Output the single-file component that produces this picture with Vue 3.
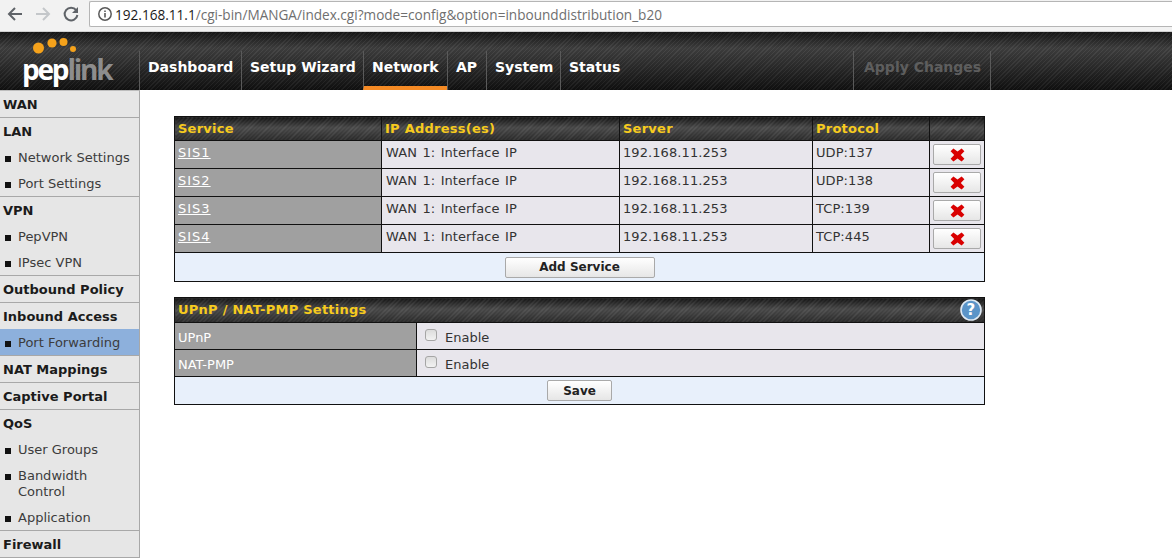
<script setup>
const navItems = [
  { label: 'Dashboard', w: 102 },
  { label: 'Setup Wizard', w: 122 },
  { label: 'Network', w: 84, active: true },
  { label: 'AP', w: 39 },
  { label: 'System', w: 74 },
  { label: 'Status', w: 68 }
]
const sidebar = [
  { title: 'WAN' },
  { title: 'LAN', items: [{ t: 'Network Settings' }, { t: 'Port Settings' }] },
  { title: 'VPN', items: [{ t: 'PepVPN' }, { t: 'IPsec VPN' }] },
  { title: 'Outbound Policy' },
  { title: 'Inbound Access', items: [{ t: 'Port Forwarding', active: true }] },
  { title: 'NAT Mappings' },
  { title: 'Captive Portal' },
  { title: 'QoS', items: [{ t: 'User Groups' }, { t: 'Bandwidth Control' }, { t: 'Application' }] },
  { title: 'Firewall' }
]
const services = [
  { name: 'SIS1', proto: 'UDP:137' },
  { name: 'SIS2', proto: 'UDP:138' },
  { name: 'SIS3', proto: 'TCP:139' },
  { name: 'SIS4', proto: 'TCP:445' }
]
</script>

<template>
  <div class="page">
    <div class="chrome">
      <svg class="tool" width="18" height="18" viewBox="0 0 18 18"><path d="M16 9H3.5M9 3 3 9l6 6" fill="none" stroke="#5f6368" stroke-width="2"/></svg>
      <svg class="tool" width="18" height="18" viewBox="0 0 18 18"><path d="M2 9h12.5M9 3l6 6-6 6" fill="none" stroke="#c4c7ca" stroke-width="2"/></svg>
      <svg class="tool" width="18" height="18" viewBox="0 0 18 18"><path d="M14.2 5.2A6.4 6.4 0 1 0 15.4 10" fill="none" stroke="#5f6368" stroke-width="2"/><path d="M16 2v6h-6z" fill="#5f6368"/></svg>
      <div class="omnibox">
        <svg width="16" height="16" viewBox="0 0 16 16"><circle cx="8" cy="8" r="6.2" fill="none" stroke="#5a5a5a" stroke-width="1.5"/><path d="M7.2 7h1.6v4.4H7.2zM7.2 4.4h1.6V6H7.2z" fill="#5a5a5a"/></svg>
        <span class="url"><span class="host">192.168.11.1</span>/cgi-bin/MANGA/index.cgi?mode=config&amp;option=inbounddistribution_b20</span>
      </div>
    </div>

    <header class="topbar">
      <div class="logo">
        <svg class="dots" width="64" height="26" viewBox="0 0 64 26">
          <circle cx="8.5" cy="12" r="5.5" fill="#f5a21b"/>
          <circle cx="22" cy="7" r="4.6" fill="#f5a21b"/>
          <circle cx="33.5" cy="6" r="4" fill="#f5a21b"/>
          <circle cx="43" cy="13" r="3" fill="#f5a21b"/>
        </svg>
        <span class="pep">pep</span><span class="link">link</span>
      </div>
      <nav class="nav">
        <a v-for="n in navItems" :key="n.label" class="nav-item" :class="{ active: n.active }" :style="{ width: n.w + 'px' }">{{ n.label }}</a>
        <a class="apply">Apply Changes</a>
      </nav>
    </header>

    <div class="body">
      <aside class="sidebar">
        <section v-for="s in sidebar" :key="s.title" class="side-group">
          <div class="side-title">{{ s.title }}</div>
          <div v-for="i in s.items" :key="i.t" class="side-item" :class="{ active: i.active }">
            <span class="bullet"></span><span class="side-text">{{ i.t }}</span>
          </div>
        </section>
      </aside>

      <main class="main">
        <table class="grid svc">
          <colgroup><col class="c1"><col class="c2"><col class="c3"><col class="c4"><col class="c5"></colgroup>
          <thead>
            <tr class="head">
              <th>Service</th><th>IP Address(es)</th><th>Server</th><th>Protocol</th><th></th>
            </tr>
          </thead>
          <tbody>
            <tr v-for="r in services" :key="r.name" class="row">
              <td class="label"><a class="svc-link">{{ r.name }}</a></td>
              <td>WAN 1: Interface IP</td>
              <td class="tight">192.168.11.253</td>
              <td class="tight">{{ r.proto }}</td>
              <td class="del-cell">
                <button class="btn del" type="button">
                  <svg width="15" height="14" viewBox="0 0 15 14"><path d="M0.6 3.2 3.4 0.4 7.5 3.4 11.6 0.4 14.4 3.2 10.8 7 14.4 10.8 11.6 13.6 7.5 10.6 3.4 13.6 0.6 10.8 4.2 7z" fill="#d90000"/></svg>
                </button>
              </td>
            </tr>
            <tr class="foot">
              <td colspan="5"><button class="btn add" type="button">Add Service</button></td>
            </tr>
          </tbody>
        </table>

        <table class="grid upnp">
          <colgroup><col class="u1"><col></colgroup>
          <thead>
            <tr class="head">
              <th colspan="2">
                <div class="head-flex">
                  <span class="head-text">UPnP / NAT-PMP Settings</span>
                  <svg class="help" width="22" height="22" viewBox="0 0 22 22">
                    <circle cx="11" cy="11" r="10" fill="#5b94c8" stroke="#dfe9f3" stroke-width="1.6"/>
                    <text x="11" y="16" text-anchor="middle" class="help-q">?</text>
                  </svg>
                </div>
              </th>
            </tr>
          </thead>
          <tbody>
            <tr class="row2">
              <td class="label">UPnP</td>
              <td><label class="check"><input type="checkbox"><span>Enable</span></label></td>
            </tr>
            <tr class="row2">
              <td class="label">NAT-PMP</td>
              <td><label class="check"><input type="checkbox"><span>Enable</span></label></td>
            </tr>
            <tr class="foot short">
              <td colspan="2"><button class="btn save" type="button">Save</button></td>
            </tr>
          </tbody>
        </table>
      </main>
    </div>
  </div>
</template>

<style scoped>
.page {
  width: 1172px;
  height: 558px;
  overflow: hidden;
  background: #fff;
  font-family: "DejaVu Sans", Verdana, sans-serif;
  font-size: 13px;
  color: #333;
}

/* browser toolbar */
.chrome {
  height: 32px;
  box-sizing: border-box;
  display: flex;
  align-items: flex-start;
  padding: 5px 0 0 6px;
  background: #f2f2f2;
  border-bottom: 1px solid #d0d0d0;
}
.tool { margin-right: 10px; flex: none; }
.omnibox {
  margin-left: -1px;
  margin-top: -4px;
  flex: 1;
  height: 26px;
  box-sizing: border-box;
  display: flex;
  align-items: center;
  gap: 2px;
  padding-left: 7px;
  background: #fff;
  border: 1px solid #b5b5b5;
  border-right: 0;
  border-radius: 2px 0 0 2px;
}
.url {
  font-family: "Open Sans", sans-serif;
  font-size: 13.6px;
  color: #6f6f6f;
  white-space: nowrap;
}
.host { color: #1a1a1a; }

/* header */
.topbar {
  height: 58px;
  box-sizing: border-box;
  display: flex;
  align-items: flex-end;
  background:
    repeating-linear-gradient(135deg, rgba(255,255,255,0.05) 0 1px, rgba(0,0,0,0.05) 1px 3px),
    linear-gradient(#161616 0, #3f3f3f 28%, #2b2b2b 60%, #101010 100%);
}
.logo {
  position: relative;
  width: 139px;
  height: 58px;
  flex: none;
  box-sizing: border-box;
  padding: 20px 0 0 22px;
  font-family: "Open Sans", sans-serif;
  font-size: 28px;
  line-height: 34px;
  letter-spacing: -2.2px;
  white-space: nowrap;
}
.dots { position: absolute; left: 30px; top: 4px; }
.pep { color: #fff; font-weight: 700; }
.link { color: #8d8d8d; font-weight: 700; }
.nav {
  flex: 1;
  height: 39px;
  display: flex;
}
.nav-item {
  box-sizing: border-box;
  border-left: 1px solid #5a5a5a;
  padding: 8px 0 0 8px;
  color: #fff;
  font-weight: 700;
  font-size: 14px;
  white-space: nowrap;
}
.nav-item:last-of-type { border-right: 1px solid #5a5a5a; width: 69px; }
.nav-item.active { border-bottom: 4px solid #f58a24; }
.apply {
  box-sizing: border-box;
  margin-left: 225px;
  width: 138px;
  border-left: 1px solid #5a5a5a;
  border-right: 1px solid #5a5a5a;
  padding: 8px 0 0 10px;
  color: #5e5e5e;
  font-weight: 700;
  font-size: 14px;
  white-space: nowrap;
}

/* body */
.body { display: flex; align-items: flex-start; }
.sidebar {
  width: 140px;
  flex: none;
  box-sizing: border-box;
  background: #e6e6e6;
  border-right: 1px solid #a8a8a8;
  border-top: 1px solid #bdbdbd;
}
.side-group { border-bottom: 1px solid #a8a8a8; }
.side-title {
  height: 26px;
  box-sizing: border-box;
  padding: 6px 0 0 3px;
  font-weight: 700;
  font-size: 13px;
  line-height: 16px;
  color: #1b1b1b;
}
.side-item {
  display: flex;
  align-items: flex-start;
  padding: 6px 0 4px 5px;
  line-height: 16px;
  color: #3c3c3c;
}
.side-item.active { background: #8db0dc; }
.bullet {
  width: 6px;
  height: 6px;
  margin: 6px 7px 0 0;
  background: #111;
  flex: none;
}
.side-text { width: 112px; }

/* tables */
.main {
  flex: 1;
  padding: 26px 0 0 34px;
}
.grid {
  width: 811px;
  table-layout: fixed;
  border-collapse: collapse;
  border: 1px solid #111;
}
.svc { margin-bottom: 15px; }
.c1 { width: 207px; }
.c2 { width: 238px; }
.c3 { width: 193px; }
.c4 { width: 117px; }
.u1 { width: 242px; }
.grid th, .grid td { border: 1px solid #111; padding: 0 4px; text-align: left; }
.head th {
  height: 23px;
  padding: 0 3px;
  color: #f7cb1e;
  font-size: 13px;
  font-weight: 700;
  letter-spacing: 0.25px;
  background:
    repeating-linear-gradient(135deg, rgba(255,255,255,0.09) 0 1px, rgba(0,0,0,0.05) 1px 3px),
    linear-gradient(#161616 0, #4a4a4a 45%, #2a2a2a 100%);
}
.head-flex { display: flex; align-items: center; justify-content: space-between; height: 24px; }
.head-text { padding-bottom: 2px; }
.help { margin-right: -1px; }
.help-q { font-size: 15px; font-weight: 700; fill: #fff; font-family: "DejaVu Sans", sans-serif; }
.row td {
  height: 28px;
  box-sizing: border-box;
  vertical-align: top;
  padding-top: 4px;
  background: #e8e6ec;
  line-height: 16px;
  word-spacing: 1.2px;
  letter-spacing: 0.08px;
}
.row td.tight { padding-left: 3px; }
.row2 td {
  height: 27px;
  box-sizing: border-box;
  background: #e8e6ec;
  vertical-align: middle;
}
.grid td.label { background: #a0a0a0; color: #fff; padding-left: 3px; }
.row2 td.label { padding-top: 2px; }
.svc-link { color: #fff; text-decoration: underline; letter-spacing: 1px; }
.row td.del-cell { padding: 3px 0 0 3px; }
.foot td {
  height: 28px;
  background: #e8f0fb;
  text-align: center;
  padding: 0;
}
.foot.short td { height: 27px; }
.btn {
  font-family: "DejaVu Sans", Verdana, sans-serif;
  font-size: 12px;
  font-weight: 700;
  color: #222;
  background: linear-gradient(#fff, #e6e6e6);
  border: 1px solid #a9a9a9;
  border-radius: 2px;
  padding: 0;
  display: inline-flex;
  align-items: center;
  justify-content: center;
  vertical-align: middle;
}
.del { width: 48px; height: 21px; }
.del svg { margin-top: 1px; }
.add { width: 150px; height: 21px; }
.save { width: 65px; height: 21px; }
.check { display: flex; align-items: center; padding-left: 4px; color: #333; padding-top: 2px; }
.check input {
  appearance: none;
  width: 12px;
  height: 12px;
  margin: -4px 8px 0 0;
  box-sizing: border-box;
  background: linear-gradient(#dcdcdc, #f2f2f2);
  border: 1px solid #a5a5a5;
  border-radius: 3px;
}
</style>
